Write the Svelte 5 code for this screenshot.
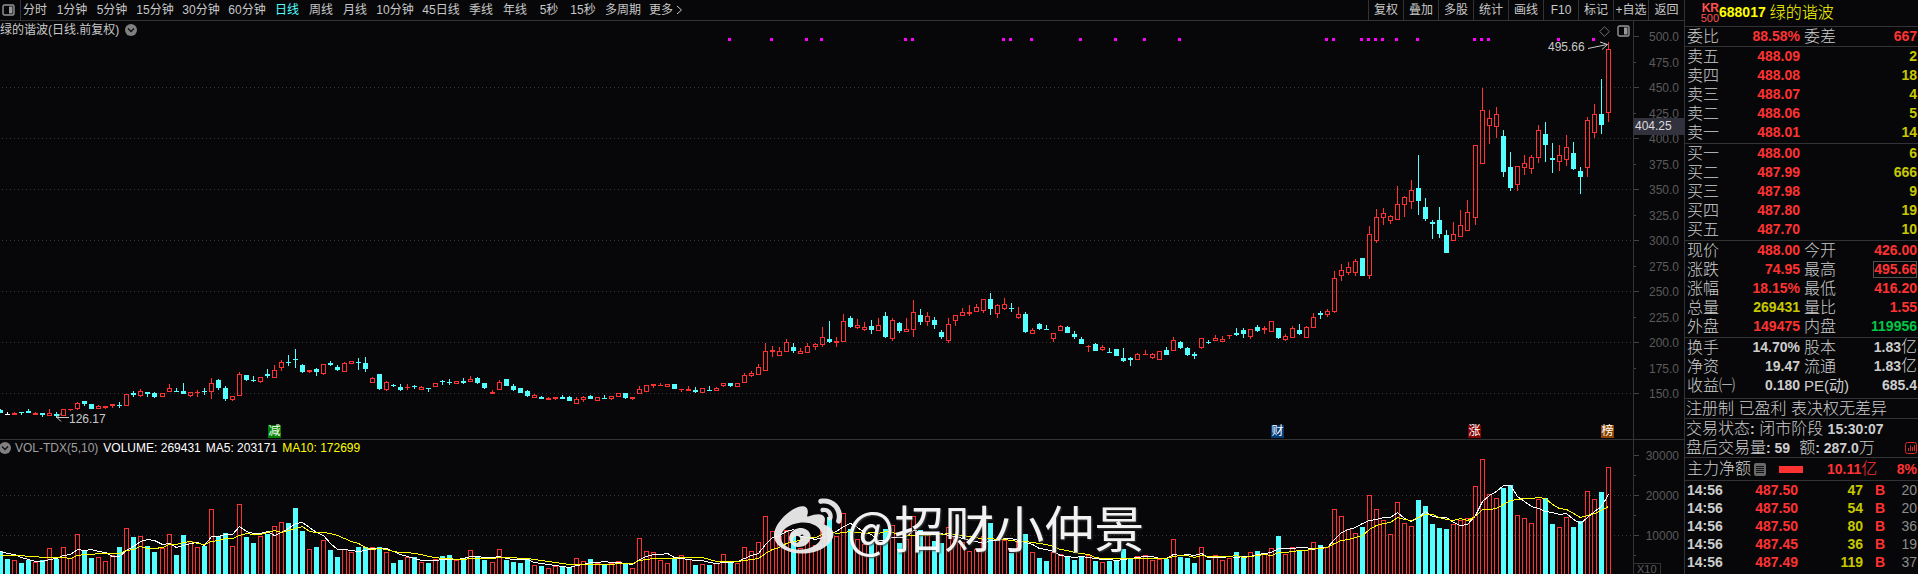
<script>
  const periods = [
    ['分时', 4], ['1分钟', 5], ['5分钟', 5], ['15分钟', 6], ['30分钟', 6], ['60分钟', 6],
    ['日线', 4], ['周线', 4], ['月线', 4], ['10分钟', 6], ['45日线', 6], ['季线', 4],
    ['年线', 4], ['5秒', 4], ['15秒', 4], ['多周期', 6], ['更多', 5]
  ];
  const tools = ['复权', '叠加', '多股', '统计', '画线', 'F10', '标记', '+自选', '返回'];

  // Each series: price origin, volume origin, then candles written as
  // kind high top bottom [low] volumeTop, counted in thirds of a chart unit.
  const series = [
    [309, -110, `c 237 240 249 665;w 246 252 255 687;r 246 249 255 690;c 246 246 249 255 699;c 237 243 249 690;r 246 249 255 696;c 249 249 255 261 690;r 237 249 258 655;c 246 252 258 264 687;r 237 237 258 652;r 237 237 240 243 685;r 216 219 237 240 613;c 213 213 222 228 660;c 222 222 237 684;r 225 228 237 682;r 228 228 234 237 693;r 222 222 228 234 676;c 216 225 228 234 651;r 192 192 228 595;c 183 189 195 201 621;r 177 183 198 201 618;c 186 186 192 201 648;c 186 189 201 204 666;r 189 189 201 655;r 162 174 186 612;c 174 183 186 675;c 159 183 192 615;r 186 186 198 201 634;r 180 186 189 201 652;c 174 183 186 195 648;r 144 159 186 207 538;c 147 150 174 180 618;c 168 174 207 213 609;r 198 198 210 213 648;r 126 132 198 522;c 135 135 150 153 621;c 138 150 153 156 639;r 141 141 156 159 618;c 117 132 138 144 614;r 105 120 144 588;r 90 96 114 123 576;c 75 96 99 108 579;c 57 87 90 114 534;c 102 105 126 129 603;r 120 120 126 129 657;c 114 117 126 138 651;r 102 102 132 135 630;c 93 99 105 108 660;c 105 111 120 123 681;r 96 99 126 657;r 93 93 102 666;c 84 96 99 120 651;c 81 99 117 126 652;r 141 144 159 652;c 132 132 177 180 651;r 153 156 180 183 666;c 162 165 168 171 699;c 162 171 180 183 690;r 162 171 174 180 681;c 165 168 171 177 681;r 168 171 180 696;c 174 174 177 186 699;r 159 159 171 687;c 150 153 156 165 678;c 147 156 159 165 675;r 153 153 162 690;c 144 153 159 162 684;r 138 147 156 660;c 141 144 159 162 681`],
    [259, -160, `c 309 309 324 327 840;r 330 336 342 847;r 300 306 330 808;c 297 297 318 840;c 312 318 330 333 846;c 324 324 339 849;c 330 333 348 351 838;r 342 345 354 855;c 348 351 357 858;r 351 354 360 864;r 351 351 357 360 858;c 345 351 357 861;c 348 351 363 862;r 351 357 372 834;r 348 351 360 366 843;c 345 348 357 837;r 351 351 363 850;c 345 354 357 852;r 348 348 357 360 850;r 339 339 351 843;c 339 339 354 357 849;r 351 351 357 360 864;r 318 327 342 774;r 315 315 336 813;r 312 312 318 324 816;r 309 315 318 840;r 312 312 321 850;c 312 312 327 837;r 327 327 330 336 826;r 318 327 333 837;c 321 330 336 339 855;r 324 324 339 852;c 318 330 333 855;r 321 324 333 850;r 309 309 318 321 822;c 309 309 318 321 846;r 309 309 321 849;r 279 285 309 801;r 273 279 288 291 813;r 252 261 285 786;r 189 213 273 708;r 198 210 216 231 753;r 201 213 228 768;r 177 186 216 750;c 189 201 213 219 760;r 204 213 222 804;r 189 198 219 780;r 189 192 201 210 795;r 141 171 195 201 714;c 123 177 186 189 711;r 171 183 189 201 768;r 102 123 186 699;c 108 114 141 144 747;r 117 135 144 147 777;r 126 141 150 153 792;c 120 138 150 162 789;r 114 135 153 789;c 96 108 171 174 747;r 114 120 177 183 735;c 126 129 153 159 789;r 114 147 156 777;r 60 96 150 171 708;c 87 105 126 135 750;r 96 108 126 138 765;c 111 120 135 147 783;c 150 156 171 177 789;r 114 132 183 189 741`],
    [249, -170, `r 135 135 153 168 800;r 114 126 138 816;r 105 126 132 138 843;r 102 111 126 838;r 87 87 123 129 798;c 69 87 117 135 759;r 102 105 132 144 811;r 84 102 117 120 811;c 99 114 117 126 849;r 111 132 144 147 816;c 126 132 186 189 792;r 174 180 192 847;c 159 162 177 180 864;c 165 177 180 873;r 189 189 207 216 847;r 165 168 183 853;c 168 171 189 861;c 183 192 201 207 870;c 201 207 222 861;r 225 228 231 246 856;c 219 222 243 873;r 225 231 240 243 877;c 234 246 249 873;c 237 237 258 873;c 234 264 273 276 837;c 261 264 270 288 867;r 249 252 270 858;r 240 252 255 855;r 249 252 264 267 870;r 243 243 270 868;c 231 240 255 867;r 201 210 243 807;c 213 216 234 237 861;c 231 234 255 258 864;c 246 252 258 267 879`],
    [179, -240, `r 414 414 444 447 1042;c 420 426 429 432 1080;r 405 414 423 1066;r 408 417 426 1080;r 405 405 408 417 1075;c 384 399 405 408 1056;c 384 390 402 414 1068;r 387 387 411 417 1057;c 375 381 393 396 1053;r 378 384 390 402 1060;r 363 363 396 1045;c 384 384 414 417 1008;r 402 408 420 423 1062;r 378 384 414 1042;c 372 390 402 405 1051;r 378 381 414 1050;r 339 351 384 1027;c 333 339 345 357 1035;r 327 333 345 351 1042;r 213 234 336 339 928;r 192 210 228 243 949;r 186 201 219 225 988;r 177 183 219 228 1000;c 174 174 228 981;r 78 102 228 237 886;r 27 51 123 129 928;r 24 39 54 75 960;r 45 48 63 72 1003`],
    [9, -240, `r 468 522 570 907;r 498 501 525 561 970;r 450 480 516 537 979;c 375 474 513 555 900;c 504 531 567 573 918;c 570 576 582 627 972;c 531 570 612 624 984;c 600 615 669 987;r 576 612 633 972;r 540 585 621 960;r 510 546 603 954;r 345 345 564 585 859;r 174 240 402 778;r 240 264 288 342 882;r 231 252 291 324 895;c 300 318 426 441 864;c 366 411 474 483 855;r 408 408 465 483 946;r 375 399 414 435 955;r 375 381 417 432 969;r 285 300 384 399 898;c 276 312 345 396 894;c 339 384 390 429 972;r 345 375 396 423 982;r 315 351 390 408 952;c 336 369 417 420 981;c 411 423 441 492 963;r 261 270 414 441 874;r 222 252 309 324 898;c 147 252 285 312 876;r 36 57 249 276 802`]
  ];

  const steps = [23, 70, 116, 163, 210];
  const candles = [];
  for (const [priceBase, volBase, text] of series) {
    for (const row of text.split(';')) {
      const [kind, ...n] = row.split(' ');
      const v = n.map(Number);
      const py = (z) => priceBase + Math.round(z / 3);
      const i = candles.length;
      const low = v.length === 5 ? v[3] : v[2];
      candles.push({
        kind,
        x: 7 * i + steps.filter((s) => i >= s).length,
        high: py(v[0]), top: py(v[1]), bottom: py(v[2]), low: py(low),
        vol: volBase + Math.floor(v[v.length - 1] / 3)
      });
    }
  }
  const colors = { r: '#ff3232', c: '#54ffff', w: '#ffffff' };
  const FLOOR = 135;
  const seed = [17, 17, 17, 17, 17, 24, 24, 24, 24];
  const heights = [...seed, ...candles.map((c) => FLOOR - c.vol)];
  function average(n) {
    return candles
      .map((c, i) => {
        const part = heights.slice(i + 10 - n, i + 10);
        return `${c.x + 0.5},${Math.round(FLOOR - part.reduce((a, b) => a + b, 0) / n) + 0.5}`;
      })
      .join(' ');
  }
  const ma5 = average(5);
  const ma10 = average(10);

  const signals = [729, 771, 806, 821, 905, 912, 1003, 1010, 1031, 1080, 1115, 1144, 1179, 1326, 1333, 1361, 1368, 1375, 1382, 1396, 1417, 1474, 1481, 1488, 1558, 1593];
  const priceGrid = [66, 117, 168, 219, 270, 321, 372];
  const volGrid = [55, 95];
  const priceTicks = Array.from({ length: 15 }, (_, i) => ({
    y: Math.floor(15.7 + i * 25.5), label: (500 - i * 25).toFixed(1), major: i % 2 === 0
  }));
  const volTicks = [
    { y: 15, label: '30000' }, { y: 35 }, { y: 55, label: '20000' },
    { y: 75 }, { y: 95, label: '10000' }, { y: 115 }
  ];
  const W = 1633;
  const pct = (x) => `${(x / W) * 100}%`;
  const events = [['减', 268, '#008000'], ['财', 1271, '#003c78'], ['涨', 1468, '#800000'], ['榜', 1601, '#8b4500']];

  const book = [
    [['卖五', '488.09', '2'], ['卖四', '488.08', '18'], ['卖三', '488.07', '4'], ['卖二', '488.06', '5'], ['卖一', '488.01', '14']],
    [['买一', '488.00', '6'], ['买二', '487.99', '666'], ['买三', '487.98', '9'], ['买四', '487.80', '19'], ['买五', '487.70', '10']]
  ];
  const quote = [
    ['现价', '488.00', 'up', '今开', '426.00', 'up'],
    ['涨跌', '74.95', 'up', '最高', '495.66', 'up boxed'],
    ['涨幅', '18.15%', 'up', '最低', '416.20', 'up'],
    ['总量', '269431', 'vol', '量比', '1.55', 'up'],
    ['外盘', '149475', 'up', '内盘', '119956', 'down']
  ];
  const basics = [
    ['换手', '14.70%', '', '股本', '1.83亿', ''],
    ['净资', '19.47', '', '流通', '1.83亿', ''],
    ['收益㈠', '0.180', '', 'PE(动)', '685.4', '']
  ];
  const trades = [
    ['14:56', '487.50', '47', 'B', '20'], ['14:56', '487.50', '54', 'B', '20'],
    ['14:56', '487.50', '80', 'B', '36'], ['14:56', '487.45', '36', 'B', '19'],
    ['14:56', '487.49', '119', 'B', '37']
  ];
</script>

{#snippet amount(text)}
  {#if text.endsWith('亿')}{text.slice(0, -1)}<span class="thin">亿</span>{:else}{text}{/if}
{/snippet}

{#snippet rows(list)}
  <table class="grid">
    <colgroup><col class="c1" /><col class="c2" /><col class="c3" /><col /></colgroup>
    <tbody>
      {#each list as r}
        <tr>
          <th>{r[0]}</th><td class={r[2]}>{r[1]}</td>
          <th class="second" class:latin={r[3].startsWith('PE')}>{r[3]}</th><td class={r[5]}><span>{@render amount(r[4])}</span></td>
        </tr>
      {/each}
    </tbody>
  </table>
{/snippet}

{#snippet chevron()}
  <svg width="12" height="12" viewBox="0 0 12 12"><circle cx="6" cy="6" r="6" fill="#808080" /><path d="M3 4.6 6 7.6 9 4.6" fill="none" stroke="#111" stroke-width="1.4" /></svg>
{/snippet}

{#snippet sidebarIcon()}
  <svg width="13" height="12" viewBox="0 0 13 12"><rect x="1" y="1" width="11" height="10" rx="1.5" fill="none" stroke="#969696" stroke-width="1.4" /><rect x="7" y="2.5" width="3.5" height="7" fill="#969696" /></svg>
{/snippet}

<div class="shell">
  <main>
    <nav class="toolbar">
      <button class="toggle" aria-label="侧栏">{@render sidebarIcon()}</button>
      <div class="periods">
        {#each periods as [name, units]}
          <button class:active={name === '日线'} style:width="{units * 6 + 10}px">{name}{#if name === '更多'}<svg class="more" width="7" height="10" viewBox="0 0 7 10"><path d="M1 1 5.5 5 1 9" fill="none" stroke="#c8c8c8" /></svg>{/if}</button>
        {/each}
      </div>
      <div class="tools">
        {#each tools as name}<button>{name}</button>{/each}
      </div>
    </nav>

    <section class="row price">
      <div class="plot">
        <svg class="canvas" viewBox="0 0 1633 418" preserveAspectRatio="none" shape-rendering="crispEdges">
          {#each priceGrid as y}
            <line x1="2" x2="1633" y1={y + 0.5} y2={y + 0.5} stroke="#38383a" stroke-dasharray="1 3" />
          {/each}
          {#each signals as x}<rect x={x - 1} y="17" width="3" height="3" fill="#ff00ff" />{/each}
          {#each candles as c}
            {@const h = Math.max(1, c.bottom - c.top)}
            <g fill={colors[c.kind]}>
              {#if c.top > c.high}<rect x={c.x} y={c.high} width="1" height={c.top - c.high} />{/if}
              {#if c.low > c.bottom}<rect x={c.x} y={c.bottom} width="1" height={c.low - c.bottom} />{/if}
              {#if c.kind === 'r' && h > 2}
                <rect x={c.x - 1.5} y={c.top + 0.5} width="4" height={h - 1} fill="none" stroke="#ff3232" />
              {:else}
                <rect x={c.x - 2} y={c.top} width="5" height={h} />
              {/if}
            </g>
          {/each}
        </svg>
        <div class="title"><span>绿的谐波(日线.前复权)</span>{@render chevron()}</div>
        <div class="corner">
          <svg width="11" height="11" viewBox="0 0 11 11"><path d="M5.5.7 10.3 5.5 5.5 10.3.7 5.5Z" fill="none" stroke="#707070" /></svg>
          {@render sidebarIcon()}
        </div>
        <div class="mark" style:left={pct(1548)} style:top="18px">
          495.66<svg width="24" height="16" viewBox="0 0 24 16"><path d="M3 9.5 22 5.5M15 3 22.5 5.5 17 10.5" fill="none" stroke="#c8c8c8" /></svg>
        </div>
        <div class="mark" style:left={pct(56)} style:top="390px">
          <svg width="13" height="12" viewBox="0 0 13 12"><path d="M.5 4.5H13M5 .5 1 4.5 5 8.5" fill="none" stroke="#c8c8c8" /></svg>126.17
        </div>
        {#each events as [name, x, bg]}
          <span class="event" style:left={pct(x)} style:background={bg}>{name}</span>
        {/each}
      </div>
      <div class="axis">
        {#each priceTicks as t}
          <i class:major={t.major} style:top="{t.y}px"></i><span style:top="{t.y}px">{t.label}</span>
        {/each}
        <b class="cursor">404.25</b>
      </div>
    </section>

    <section class="row volume">
      <div class="plot">
        <svg class="canvas" viewBox="0 0 1633 134" preserveAspectRatio="none" shape-rendering="crispEdges">
          {#each volGrid as y}
            <line x1="2" x2="1633" y1={y + 0.5} y2={y + 0.5} stroke="#38383a" stroke-dasharray="1 3" />
          {/each}
          {#each candles as c}
            {#if c.kind === 'r'}
              <rect x={c.x - 1.5} y={c.vol + 0.5} width="4" height="140" fill="none" stroke="#ff3232" />
            {:else}
              <rect x={c.x - 2} y={c.vol} width="5" height="140" fill="#54ffff" />
            {/if}
          {/each}
          <polyline points={ma5} fill="none" stroke="#ffffff" />
          <polyline points={ma10} fill="none" stroke="#ffff00" />
        </svg>
        <div class="legend">
          {@render chevron()}<span class="name">VOL-TDX(5,10)</span><span>VOLUME: 269431</span><span>MA5: 203171</span><span class="ma10">MA10: 172699</span>
        </div>
        <div class="watermark">
          <svg width="68" height="68" viewBox="0 0 24 24"><path fill="#ececec" d="M10.098 20.323c-3.977.391-7.414-1.406-7.672-4.02-.259-2.609 2.759-5.047 6.74-5.441 3.979-.394 7.413 1.404 7.671 4.018.259 2.6-2.759 5.049-6.737 5.439l-.002.004zM9.05 17.219c-.384.616-1.208.884-1.829.602-.612-.279-.793-.991-.406-1.593.379-.595 1.176-.861 1.793-.601.622.263.82.972.442 1.592zm1.27-1.627c-.141.237-.449.353-.689.253-.236-.09-.313-.361-.177-.586.138-.227.436-.346.672-.24.239.09.315.36.18.601l.014-.028zm.176-2.719c-1.893-.493-4.033.45-4.857 2.118-.836 1.704-.026 3.591 1.886 4.21 1.983.64 4.318-.341 5.132-2.179.8-1.793-.201-3.642-2.161-4.149zm7.563-1.224c-.346-.105-.57-.18-.405-.615.375-.977.42-1.804 0-2.404-.781-1.112-2.915-1.053-5.364-.03 0 0-.766.331-.571-.271.376-1.217.315-2.224-.27-2.809-1.338-1.337-4.869.045-7.888 3.08C1.309 10.87 0 13.273 0 15.348c0 3.981 5.099 6.395 10.086 6.395 6.536 0 10.888-3.801 10.888-6.82 0-1.822-1.547-2.854-2.915-3.284v.01zm1.908-5.092c-.766-.856-1.908-1.187-2.96-.962-.436.09-.706.511-.616.932.09.42.511.691.932.602.511-.105 1.067.044 1.442.465.376.421.466.977.316 1.473-.136.406.089.856.51.992.405.119.857-.105.992-.512.33-1.021.12-2.178-.646-3.035l.03.045zm2.418-2.195c-1.576-1.757-3.905-2.419-6.054-1.968-.496.104-.812.587-.706 1.081.104.496.586.813 1.082.707 1.532-.331 3.185.15 4.296 1.383 1.112 1.246 1.429 2.943.947 4.416-.165.48.106 1.007.586 1.157.479.165.991-.104 1.157-.586.675-2.088.241-4.478-1.338-6.235l.03.045z" /></svg>
          <span>@招财小仲景</span>
        </div>
      </div>
      <div class="axis">
        {#each volTicks as t}
          <i class:major={t.label} style:top="{t.y}px"></i>{#if t.label}<span style:top="{t.y}px">{t.label}</span>{/if}
        {/each}
        <b class="unit">X10</b>
      </div>
    </section>
  </main>

  <aside>
    <header>
      <span class="tag"><b>KR</b><span>500</span></span><strong>688017</strong><h1>绿的谐波</h1>
    </header>
    <div class="block">{@render rows([['委比', '88.58%', 'up', '委差', '667', 'up']])}</div>
    {#each book as side}
      <div class="block padded">
        <table class="grid">
          <colgroup><col class="c1" /><col class="c2" /><col /></colgroup>
          <tbody>
            {#each side as [name, price, lots]}
              <tr><th>{name}</th><td class="up">{price}</td><td class="vol">{lots}</td></tr>
            {/each}
          </tbody>
        </table>
      </div>
    {/each}
    <div class="block padded">{@render rows(quote)}</div>
    <div class="block basics">{@render rows(basics)}</div>
    <p class="block note">注册制 已盈利 表决权无差异</p>
    <div class="block status">
      <p>交易状态<b>:</b> 闭市阶段 <b>15:30:07</b></p>
      <p class="after"><span>盘后交易量<b>: 59</b></span><span>额<b>: 287.0</b>万</span>
        <svg width="12" height="12" viewBox="0 0 12 12"><rect x=".5" y=".5" width="11" height="11" rx="2" fill="none" stroke="#dc2828" /><path d="M3.5 9V6M5.5 9V3.5M7.5 9V5M9.5 9V3" stroke="#dc2828" fill="none" /></svg>
      </p>
    </div>
    <div class="block flow">
      <span>主力净额</span>
      <svg width="12" height="13" viewBox="0 0 12 13"><rect width="12" height="13" rx="2" fill="#686868" /><path d="M2 3.5h8M2 5.5h8M2 7.5h8M2 9.5h8" stroke="#111" /></svg>
      <i></i>
      <span class="up amount"><b>10.11</b>亿</span>
      <b class="up share">8%</b>
    </div>
    <table class="grid trades">
      <colgroup><col class="c1" /><col class="t2" /><col class="t3" /><col class="t4" /><col /></colgroup>
      <tbody>
        {#each trades as [time, price, lots, side, count]}
          <tr><td class="time">{time}</td><td class="up">{price}</td><td class="vol">{lots}</td><td class="up">{side}</td><td class="count">{count}</td></tr>
        {/each}
      </tbody>
    </table>
  </aside>
</div>

<style>
  :global(body) { background: #070709; }
  * { box-sizing: border-box; }
  svg { display: block; flex: none; }
  p, h1 { margin: 0; font-weight: 300; }
  .shell {
    display: flex;
    min-height: 100vh;
    overflow: hidden;
    background: #070709;
    color: #c8c8c8;
    font: 12px/16px "Liberation Sans", "Noto Sans CJK SC", sans-serif;
  }
  main { flex: 1; min-width: 0; display: flex; flex-direction: column; }

  .toolbar { display: flex; height: 21px; border-bottom: 1px solid #333336; }
  button {
    height: 20px;
    padding: 0;
    border: 0;
    background: none;
    color: inherit;
    font: inherit;
    line-height: 20px;
    white-space: nowrap;
    display: flex;
    align-items: center;
    justify-content: center;
    flex: none;
  }
  .toggle { width: 21px; padding-right: 4px; border-right: 1px solid #333336; }
  .periods { display: flex; flex: 1; min-width: 0; margin-left: -3px; overflow: hidden; }
  .periods .active { color: #54ffff; }
  .more { margin-left: 3px; }
  .tools { display: flex; }
  .tools button { width: 35px; border-left: 1px solid #333336; }
  .tools button:last-child { width: 36px; }

  .row { display: flex; }
  .price { height: 419px; border-bottom: 1px solid #333336; }
  .volume { flex: 1; min-height: 134px; }
  .plot { position: relative; flex: 1; min-width: 0; overflow: hidden; }
  .canvas { width: 100%; }
  .price .canvas { height: 418px; }
  .volume .canvas { height: 134px; }
  .title { position: absolute; left: 0; top: 1px; display: flex; align-items: center; gap: 6px; }
  .corner { position: absolute; right: 3px; top: 4px; display: flex; align-items: center; gap: 7px; }
  .mark { position: absolute; display: flex; align-items: center; white-space: nowrap; }
  .event {
    position: absolute;
    bottom: 1px;
    width: 13px;
    height: 13px;
    color: #fff;
    line-height: 13px;
    text-align: center;
  }
  .legend { position: absolute; left: -1px; top: 0; display: flex; align-items: center; gap: 5px; color: #fff; }
  .legend .name { margin-left: -1px; color: #a0a0a0; }
  .legend .ma10 { color: #ffff00; }
  .watermark {
    position: absolute;
    left: 47.4%;
    top: 50px;
    display: flex;
    align-items: center;
    gap: 5px;
    color: #fff;
    font: 50px/72px "Noto Sans CJK SC", sans-serif;
    opacity: 0.95;
    white-space: nowrap;
    text-shadow: 1px 1px 2px #444;
  }
  .axis { position: relative; width: 51px; border-left: 1px solid #333336; color: #5a5a5a; }
  .axis i { position: absolute; left: 0; width: 2px; height: 1px; background: #444; }
  .axis i.major { width: 5px; }
  .axis span { position: absolute; right: 5px; margin-top: -7px; }
  .axis b { position: absolute; left: 0; font-weight: 400; }
  .axis .cursor { top: 97px; width: 100%; height: 17px; line-height: 17px; padding-left: 1px; background: #32323f; color: #dcdcdc; }
  .axis .unit { left: -1px; top: 123px; width: 28px; height: 11px; line-height: 10px; border: 1px solid #333336; border-bottom: 0; padding-left: 3px; font-size: 11px; }

  aside {
    width: 234px;
    flex: none;
    border-left: 1px solid #333336;
    color: #cdcdcd;
    font: 300 16px/19px "Liberation Sans", "Noto Sans CJK SC", sans-serif;
    white-space: nowrap;
    overflow: hidden;
  }
  aside b, aside strong { font-size: 14px; font-weight: 700; }
  header { display: flex; align-items: center; height: 27px; padding: 0 0 1px 16px; border-bottom: 1px solid #333336; color: #ffff00; }
  header .tag { width: 18px; display: flex; flex-direction: column; align-items: flex-end; color: #ff5050; font-size: 11px; line-height: 10px; font-weight: 400; }
  header .tag b { font-size: 12px; }
  h1 { margin-left: 4px; font-size: 16px; }
  .block { padding: 0 1px 0 2px; border-bottom: 1px solid #333336; }
  .padded { padding-bottom: 1px; }
  .basics { padding-bottom: 3px; }
  .note { height: 20px; padding-left: 1px; }
  .status { padding-left: 1px; }
  .status p { height: 19px; }
  .grid { width: 100%; table-layout: fixed; border-collapse: collapse; border-spacing: 0; }
  .c1 { width: 50px; }
  .c2 { width: 63px; }
  .c3 { width: 52px; }
  .t2 { width: 61px; }
  .t3 { width: 65px; }
  .t4 { width: 22px; }
  tr { height: 19px; }
  th, td { height: 19px; padding: 0; vertical-align: middle; }
  th { font-weight: 300; text-align: left; }
  th.second { padding-left: 4px; }
  th.latin { font-weight: 400; font-size: 15px; }
  td { text-align: right; font-weight: 700; font-size: 14px; }
  .thin { font-weight: 300; font-size: 16px; line-height: 14px; }
  .up { color: #ff3232; }
  .down { color: #00c846; }
  .vol { color: #c8c800; }
  .boxed span { display: inline-block; padding: 0 0 0 1px; line-height: 17px; outline: 1px solid #505050; outline-offset: -1px; }
  .after { display: flex; gap: 9px; align-items: center; }
  .after svg { margin-left: auto; }
  .flow { display: flex; align-items: center; height: 23px; line-height: 18px; }
  .flow svg { margin-left: 3px; }
  .flow i { width: 24px; height: 7px; margin-left: 13px; background: #ff3232; }
  .amount { margin-left: 24px; }
  .share { margin-left: auto; }
  .trades { width: 230px; margin: 0 1px 0 2px; }
  .trades tr, .trades td { height: 18px; line-height: 18px; }
  .trades .time { text-align: left; }
  .trades .count { color: #8c8c8c; font-weight: 400; }
</style>
